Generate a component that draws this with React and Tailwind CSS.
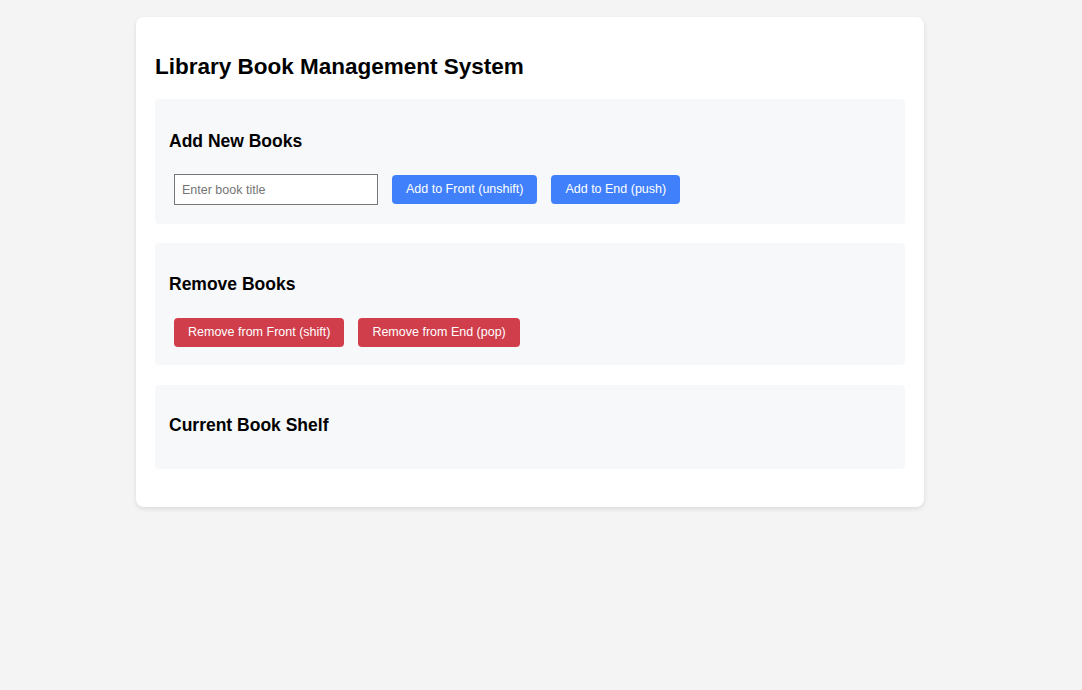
import React from "react";

export default function App() {
  const font = { fontFamily: '"Liberation Sans", Arial, sans-serif' };
  return (
    <div className="min-h-[690px] w-full bg-[#f4f4f4] pt-[17px]" style={font}>
      <div className="ml-[136px] w-[788px] rounded-[8px] bg-white px-[19px] pt-[19px] pb-[19px] shadow-[0_2px_5px_rgba(0,0,0,0.1)]">
        <h1 className="mt-[17px] mb-[18px] text-[22.5px] font-bold leading-[28px] text-black">
          Library Book Management System
        </h1>

        <section className="mb-[19px] rounded-[4px] bg-[#f7f8fa] px-[14px] pt-[15px] pb-[19px]">
          <h2 className="mt-[17px] text-[17.5px] font-bold leading-[21px] text-black">Add New Books</h2>
          <div className="mt-[22px] ml-[5px] flex items-center gap-[14px]">
            <input
              type="text"
              placeholder="Enter book title"
              className="h-[31px] w-[204px] border border-[#767676] bg-white px-[7px] text-[12.5px] text-black outline-none placeholder:text-[#757575]"
              style={font}
            />
            <button className="h-[29px] rounded-[4px] bg-[#4080fb] px-[14px] text-[12.5px] text-white" style={font}>
              Add to Front (unshift)
            </button>
            <button className="h-[29px] rounded-[4px] bg-[#4080fb] px-[14px] text-[12.5px] text-white" style={font}>
              Add to End (push)
            </button>
          </div>
        </section>

        <section className="mb-[20px] rounded-[4px] bg-[#f7f8fa] px-[14px] pt-[15px] pb-[18px]">
          <h2 className="mt-[16px] text-[17.5px] font-bold leading-[21px] text-black">Remove Books</h2>
          <div className="mt-[23px] ml-[5px] flex items-center gap-[14px]">
            <button className="h-[29px] rounded-[4px] bg-[#d03e4b] px-[14px] text-[12.5px] text-white" style={font}>
              Remove from Front (shift)
            </button>
            <button className="h-[29px] rounded-[4px] bg-[#d03e4b] px-[14px] text-[12.5px] text-white" style={font}>
              Remove from End (pop)
            </button>
          </div>
        </section>

        <section className="mb-[19px] rounded-[4px] bg-[#f7f8fa] px-[14px] pt-[15px] pb-[18px]">
          <h2 className="mt-[15px] text-[17.5px] font-bold leading-[21px] text-black">Current Book Shelf</h2>
          <div className="h-[15px]"></div>
        </section>
      </div>
    </div>
  );
}
